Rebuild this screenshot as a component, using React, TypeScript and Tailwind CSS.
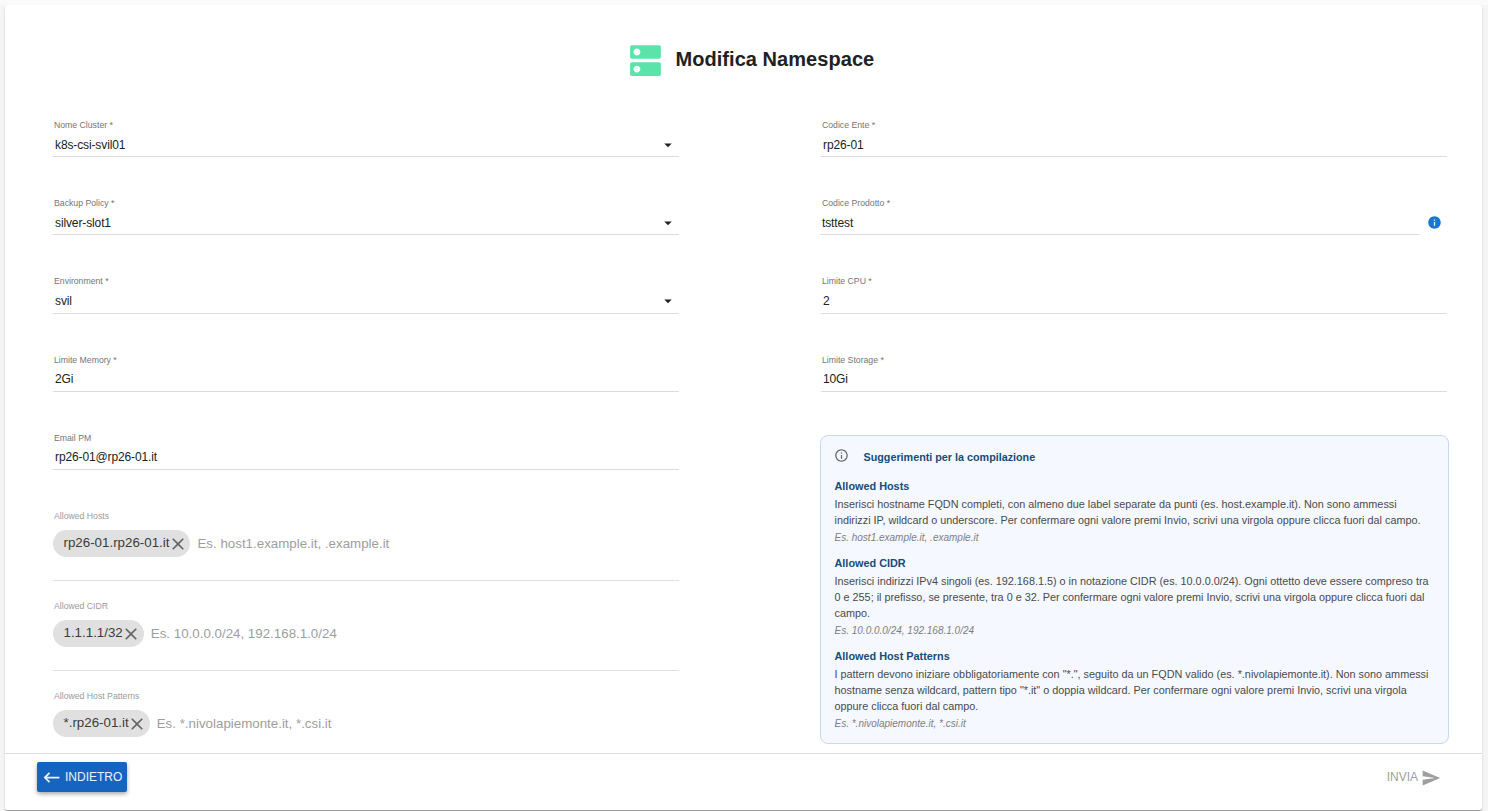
import type { ReactNode } from "react";
import {
  MdArrowDropDown,
  MdClose,
  MdDns,
  MdInfo,
  MdInfoOutline,
  MdKeyboardBackspace,
  MdSend,
} from "react-icons/md";

function Label({ children, muted }: { children: ReactNode; muted?: boolean }) {
  return (
    <div
      className={`ml-px h-3 whitespace-nowrap text-[8.7px] leading-3 ${muted ? "text-[#9b9b9b]" : "text-[#757575]"}`}
    >
      {children}
    </div>
  );
}

type FieldProps = { label: string; value: string; select?: boolean };

function Field({ label, value, select }: FieldProps) {
  return (
    <div className="h-[78.2px] shrink-0">
      <Label>{label}</Label>
      <div className="mt-[2.2px] flex h-6 items-center justify-between border-b border-[#dcdcdc] pl-[2px] pr-[2px] text-[12px] leading-4 tracking-[-0.12px] text-[#212121]">
        <span>{value}</span>
        {select && <MdArrowDropDown size={18} />}
      </div>
    </div>
  );
}

type ChipFieldProps = { label: string; chip: string; placeholder: string; last?: boolean };

function ChipField({ label, chip, placeholder, last }: ChipFieldProps) {
  return (
    <div className="h-[90px] shrink-0">
      <Label muted>{label}</Label>
      <div className={`mt-2 h-[51px] text-[13.33px] ${last ? "" : "border-b border-[#e0e0e0]"}`}>
        <div className="flex items-center gap-[7px]">
          <div className="flex h-[27px] items-center rounded-full bg-[#e0e0e0] pl-[10.5px] pr-[3.5px] text-[#3c3c3c]">
            <span className="pb-px leading-4">{chip}</span>
            <MdClose size={20} className="-ml-[1.5px] mt-px -mr-px text-[#666]" />
          </div>
          <span className="mt-px leading-4 text-[#9e9e9e]">{placeholder}</span>
        </div>
      </div>
    </div>
  );
}

type HintProps = { title: string; lines: string[]; example: string };

function Hint({ title, lines, example }: HintProps) {
  return (
    <section className="mb-[9.8px] whitespace-nowrap">
      <h3 className="text-[10.86px] font-bold leading-[16.2px] text-[#154c79]">{title}</h3>
      <p className="mt-[1.9px] text-[10.83px] leading-[16.2px] text-[#4a4a4a]">
        {lines.map((line) => (
          <span key={line} className="block">
            {line}
          </span>
        ))}
      </p>
      <p className="mt-[1.6px] text-[10px] italic leading-[15px] text-[#808080]">{example}</p>
    </section>
  );
}

const hints: HintProps[] = [
  {
    title: "Allowed Hosts",
    lines: [
      "Inserisci hostname FQDN completi, con almeno due label separate da punti (es. host.example.it). Non sono ammessi",
      "indirizzi IP, wildcard o underscore. Per confermare ogni valore premi Invio, scrivi una virgola oppure clicca fuori dal campo.",
    ],
    example: "Es. host1.example.it, .example.it",
  },
  {
    title: "Allowed CIDR",
    lines: [
      "Inserisci indirizzi IPv4 singoli (es. 192.168.1.5) o in notazione CIDR (es. 10.0.0.0/24). Ogni ottetto deve essere compreso tra",
      "0 e 255; il prefisso, se presente, tra 0 e 32. Per confermare ogni valore premi Invio, scrivi una virgola oppure clicca fuori dal",
      "campo.",
    ],
    example: "Es. 10.0.0.0/24, 192.168.1.0/24",
  },
  {
    title: "Allowed Host Patterns",
    lines: [
      'I pattern devono iniziare obbligatoriamente con "*.", seguito da un FQDN valido (es. *.nivolapiemonte.it). Non sono ammessi',
      'hostname senza wildcard, pattern tipo "*.it" o doppia wildcard. Per confermare ogni valore premi Invio, scrivi una virgola',
      "oppure clicca fuori dal campo.",
    ],
    example: "Es. *.nivolapiemonte.it, *.csi.it",
  },
];

export default function App() {
  return (
    <div className="h-[811px] w-[1488px] overflow-hidden border-t-[5px] border-[#fafafa] bg-[#f5f5f5] pl-[5px] font-['Liberation_Sans',Arial,sans-serif]">
      <div className="flex h-[806px] w-[1477px] flex-col rounded-[3px] border-b border-[#9e9e9e] bg-white shadow-[0_2px_3px_rgba(0,0,0,0.14)]">
        <header className="flex h-[113px] shrink-0 pl-[620px] pt-[35px]">
          <MdDns size={41} className="text-[#5be3a9]" />
          <h1 className="ml-[9.5px] mt-[5px] text-[20px] font-bold leading-7 tracking-[0.05px] text-[#212121]">
            Modifica Namespace
          </h1>
        </header>

        <main className="flex min-h-0 flex-1 overflow-hidden pl-12">
          <div className="mt-px flex w-[626px] flex-col">
            <Field label="Nome Cluster *" value="k8s-csi-svil01" select />
            <Field label="Backup Policy *" value="silver-slot1" select />
            <Field label="Environment *" value="svil" select />
            <Field label="Limite Memory *" value="2Gi" />
            <Field label="Email PM" value="rp26-01@rp26-01.it" />
            <ChipField
              label="Allowed Hosts"
              chip="rp26-01.rp26-01.it"
              placeholder="Es. host1.example.it, .example.it"
            />
            <ChipField
              label="Allowed CIDR"
              chip="1.1.1.1/32"
              placeholder="Es. 10.0.0.0/24, 192.168.1.0/24"
            />
            <ChipField
              label="Allowed Host Patterns"
              chip="*.rp26-01.it"
              placeholder="Es. *.nivolapiemonte.it, *.csi.it"
              last
            />
          </div>

          <div className="ml-[141px] mt-px w-[629px]">
            <div className="pl-px pr-[2px]">
              <Field label="Codice Ente *" value="rp26-01" />
            </div>
            <div className="h-[78.2px]">
              <div className="pl-px">
                <Label>Codice Prodotto *</Label>
              </div>
              <div className="mt-[2.2px] flex items-center">
                <div className="flex h-6 w-[599px] items-center border-b border-[#dcdcdc] pl-[2px] text-[12px] leading-4 tracking-[-0.12px] text-[#212121]">
                  tsttest
                </div>
                <MdInfo size={15} className="-mt-[2px] ml-2 text-[#1976d2]" />
              </div>
            </div>
            <div className="pl-px pr-[2px]">
              <Field label="Limite CPU *" value="2" />
              <Field label="Limite Storage *" value="10Gi" />
            </div>
            <aside className="mt-[3.2px] h-[309px] rounded-lg border border-[#c5d9f1] bg-[#f5f8ff] pl-[13.5px] pt-[12px]">
              <div className="mb-[12px] flex h-[18px] items-center">
                <MdInfoOutline size={15} className="-ml-px -mt-[3px] text-[#666]" />
                <h2 className="ml-[15px] text-[10.77px] font-bold leading-4 text-[#154c79]">
                  Suggerimenti per la compilazione
                </h2>
              </div>
              {hints.map((hint) => (
                <Hint key={hint.title} {...hint} />
              ))}
            </aside>
          </div>
        </main>

        <footer className="flex h-[57px] shrink-0 justify-between border-t border-[#dcdcdc] pl-8 pr-[41px] pt-2">
          <button className="flex h-[30px] w-[90px] items-center rounded-[2px] bg-[#1565c0] pl-[4px] text-[12px] text-[#eaf2fb] shadow-[0_2px_4px_rgba(0,0,0,0.35)]">
            <MdKeyboardBackspace size={21} />
            <span className="ml-[3px]">INDIETRO</span>
          </button>
          <button className="flex h-[30px] items-center text-[12px] text-[#9e9e9e]" disabled>
            <span>INVIA</span>
            <MdSend size={20} className="ml-[3px] mt-[2px]" />
          </button>
        </footer>
      </div>
    </div>
  );
}
